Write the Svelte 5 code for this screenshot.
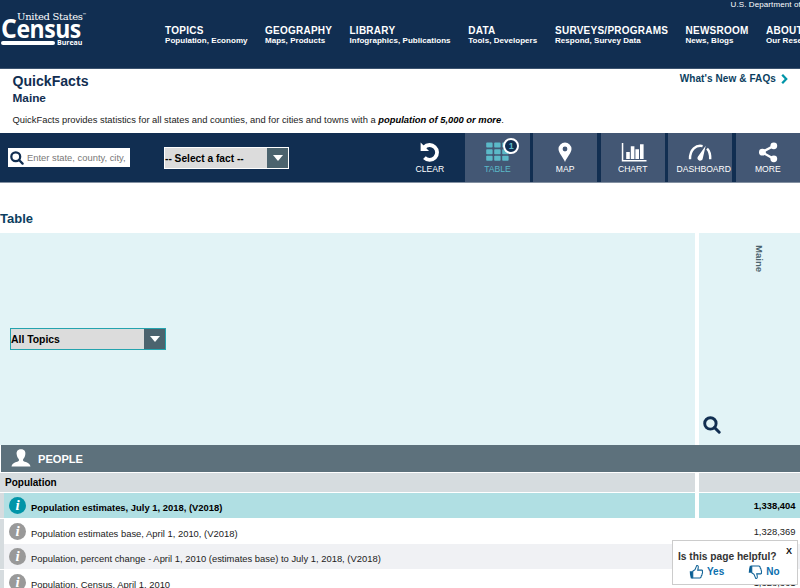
<script>
  const nav = [
    { title: 'TOPICS', sub: 'Population, Economy' },
    { title: 'GEOGRAPHY', sub: 'Maps, Products' },
    { title: 'LIBRARY', sub: 'Infographics, Publications' },
    { title: 'DATA', sub: 'Tools, Developers' },
    { title: 'SURVEYS/PROGRAMS', sub: 'Respond, Survey Data' },
    { title: 'NEWSROOM', sub: 'News, Blogs' },
    { title: 'ABOUT US', sub: 'Our Research' }
  ]

  const tabs = ['TABLE', 'MAP', 'CHART', 'DASHBOARD', 'MORE']

  const rows = [
    { label: 'Population estimates, July 1, 2018, (V2018)', value: '1,338,404' },
    { label: 'Population estimates base, April 1, 2010, (V2018)', value: '1,328,369' },
    { label: 'Population, percent change - April 1, 2010 (estimates base) to July 1, 2018, (V2018)', value: '0.8%' },
    { label: 'Population, Census, April 1, 2010', value: '1,328,361' }
  ]

  let selected = $state('TABLE')
  let active = $state(0)
  let feedback = $state(true)
</script>

{#snippet search()}
  <svg class="search-icon" viewBox="0 0 18 18">
    <circle cx="7.4" cy="7.4" r="5.7" />
    <path d="M11.6 11.6L16.2 16.2" />
  </svg>
{/snippet}

{#snippet thumb()}
  <svg class="thumb" viewBox="0 0 16 16">
    <path class="line" d="M4 7.2L6.4 5.6L8.2 1.2Q10.4 .8 9.8 4L9.3 6H13.6Q14.9 6.2 14.2 7.8Q15 9 13.9 10Q14.3 11.3 13.1 12Q13.1 14.4 11.5 14.4H4Z" />
    <path class="cuff" d="M.8 7.2H4V14.8H2Q.8 11 .8 7.2Z" />
  </svg>
{/snippet}

<div class="page">
  <header>
    <div class="logo">
      <span class="us">United States<small>™</small></span>
      <span class="census"><big>C</big>ensus</span>
      <span class="bureau"><i></i>Bureau</span>
    </div>
    <nav>
      {#each nav as item}
        <div class="nav-item">
          <b>{item.title}</b>
          <span>{item.sub}</span>
        </div>
      {/each}
    </nav>
    <span class="department">U.S. Department of Commerce</span>
  </header>

  <section class="intro">
    <div class="titles">
      <h1>QuickFacts</h1>
      <h2>Maine</h2>
      <p>QuickFacts provides statistics for all states and counties, and for cities and towns with a <strong>population of 5,000 or more</strong>.</p>
    </div>
    <div class="faq">
      What's New &amp; FAQs
      <svg viewBox="0 0 7 10"><path d="M1.2 .8L5.2 5L1.2 9.2" /></svg>
    </div>
  </section>

  <section class="toolbar">
    <div class="search-box">
      {@render search()}
      <span>Enter state, county, city,</span>
    </div>
    <div class="select fact">
      <span>-- Select a fact --</span>
      <i></i>
    </div>
    <div class="actions">
      <div class="action clear">
        <svg viewBox="0 0 24 24">
          <path class="ring" d="M6.2 7.4A7.4 7.4 0 1 1 6.4 17.6" />
          <path d="M2.6 2.6V11H11L8.6 8.4L5.4 5.2Z" />
        </svg>
        <span>CLEAR</span>
      </div>
      {#each tabs as tab}
        <!-- svelte-ignore a11y_click_events_have_key_events, a11y_no_static_element_interactions -->
        <div class="action tab" class:selected={selected === tab} onclick={() => (selected = tab)}>
          {#if tab === 'TABLE'}
            <svg viewBox="0 0 24 24">
              {#each [2.6, 9.2, 15.8] as y}
                {#each [1.2, 9.2, 17.2] as x}
                  <rect {x} {y} width="6.4" height="5" rx=".8" />
                {/each}
              {/each}
            </svg>
            <em>1</em>
          {:else if tab === 'MAP'}
            <svg viewBox="0 0 24 24">
              <path fill-rule="evenodd" d="M12 2.5A6.5 6.5 0 0 0 5.5 9C5.5 13 10.4 17.5 12 22C13.6 17.5 18.5 13 18.5 9A6.5 6.5 0 0 0 12 2.5ZM12 6.6A2.4 2.4 0 1 1 12 11.4A2.4 2.4 0 1 1 12 6.6Z" />
            </svg>
          {:else if tab === 'CHART'}
            <svg class="wide" viewBox="0 0 26 24">
              <path d="M.8 3H2.3V20H25.5V21.5H.8ZM5.2 12H8.8V19H5.2ZM9.8 6.3H13.4V19H9.8ZM14.4 9.3H18V19H14.4ZM19 4.3H22.6V19H19Z" />
            </svg>
          {:else if tab === 'DASHBOARD'}
            <svg viewBox="0 0 24 24">
              <path class="arc" d="M2 19.2C1.8 9.5 8.2 4.6 14.6 6.1M19.1 8.7C21.5 11.2 22.4 14.5 22.2 19.2" />
              <path d="M17.7 5.8L14.8 18.2A2.7 2.7 0 1 1 10 16.4Z" />
            </svg>
          {:else}
            <svg viewBox="0 0 24 24">
              <path class="link" d="M18 5.7L6 12.2L18 19" />
              <circle cx="17.8" cy="5.8" r="3.4" />
              <circle cx="6.4" cy="12.2" r="3.4" />
              <circle cx="17.8" cy="18.8" r="3.4" />
            </svg>
          {/if}
          <span class:long={tab.length > 6}>{tab}</span>
        </div>
      {/each}
    </div>
  </section>

  <h3>Table</h3>

  <section class="table">
    <div class="grid head">
      <div class="cell">
        <div class="select topics">
          <span>All Topics</span>
          <i></i>
        </div>
      </div>
      <div class="cell place">
        <span>Maine</span>
        {@render search()}
      </div>
    </div>
    <div class="category">
      <svg viewBox="0 0 20 18">
        <path d="M10 .3C6.4 .3 5.2 2.8 5.7 5.6C6 7.7 6.8 9.2 7.9 10.2V11.7C6.6 13 1 13.4 .5 17.5H19.5C19 13.4 13.4 13 12.1 11.7V10.2C13.2 9.2 14 7.7 14.3 5.6C14.8 2.8 13.6 .3 10 .3Z" />
      </svg>
      PEOPLE
    </div>
    <div class="grid group">
      <div class="cell">Population</div>
      <div class="cell"></div>
    </div>
    {#each rows as row, i}
      <!-- svelte-ignore a11y_click_events_have_key_events, a11y_no_static_element_interactions -->
      <div class="grid row" class:active={active === i} onclick={() => (active = i)}>
        <div class="cell">
          <span class="info">i</span>
          <span class="text">{row.label}</span>
        </div>
        <div class="cell value">{row.value}</div>
      </div>
    {/each}
  </section>

  {#if feedback}
    <aside>
      <button onclick={() => (feedback = false)}>X</button>
      <div class="question">Is this page helpful?</div>
      <div class="answers">
        <span class="yes">{@render thumb()}Yes</span>
        <span class="no">{@render thumb()}No</span>
      </div>
    </aside>
  {/if}
</div>

<style>
  :global(body) {
    overflow: hidden;
  }

  .page {
    position: relative;
    width: 800px;
    height: 588px;
    overflow: hidden;
    background: #fff;
    color: #222;
    font-family: 'Liberation Sans', Arial, sans-serif;
    white-space: nowrap;
  }

  .page * {
    box-sizing: border-box;
  }

  svg {
    display: block;
    flex: none;
  }

  header {
    position: relative;
    display: flex;
    height: 69px;
    background: #112e51;
    border-bottom: 1px solid #3c536f;
    color: #fff;
  }

  .logo {
    display: flex;
    flex: none;
    flex-direction: column;
    width: 165px;
    padding: 11px 0 0 1px;
  }

  .us {
    height: 8px;
    padding-left: 16px;
    font: 10px/11px 'DejaVu Serif', serif;
    letter-spacing: -0.3px;
  }

  .us small {
    font-size: 4px;
    line-height: 0;
    vertical-align: 4px;
  }

  .census {
    height: 21px;
    font: bold 25px/18px 'Open Sans', sans-serif;
    letter-spacing: -0.5px;
    transform: scaleX(0.92);
    transform-origin: left;
  }

  .census big {
    font-size: 27px;
    line-height: 0;
  }

  .bureau {
    display: flex;
    align-items: center;
    gap: 2px;
    height: 6px;
    font: bold 7px/6px 'Open Sans', sans-serif;
  }

  .bureau i {
    width: 54px;
    height: 4px;
    border-radius: 2px;
    background: #fff;
  }

  nav {
    display: grid;
    grid-template-columns: 100px 84.5px 118.7px 86.8px 130.5px 80.5px 80px;
    padding-top: 25px;
  }

  .nav-item b,
  .nav-item span {
    display: block;
    font-size: 10px;
    line-height: 11px;
    letter-spacing: 0.25px;
  }

  .nav-item span {
    font-size: 8px;
    font-weight: bold;
    line-height: 10px;
    letter-spacing: 0.04px;
  }

  .department {
    position: absolute;
    top: 0;
    left: 730.5px;
    font-size: 8px;
    line-height: 9px;
    letter-spacing: 0.1px;
  }

  .intro {
    display: flex;
    justify-content: space-between;
    height: 64px;
    padding: 4px 12px 0 12.5px;
  }

  h1 {
    margin: 0;
    color: #112e51;
    font-size: 14.1px;
    line-height: 17px;
  }

  h2 {
    margin: 0;
    color: #112e51;
    font-size: 11.8px;
    line-height: 17px;
  }

  p {
    margin: 7px 0 0;
    font-size: 9.38px;
    line-height: 13px;
  }

  strong {
    color: #000;
    font-style: italic;
  }

  .faq {
    display: flex;
    align-items: center;
    gap: 5px;
    height: 11px;
    color: #0b3e60;
    font-size: 10px;
    font-weight: bold;
    letter-spacing: 0.1px;
  }

  .faq svg {
    width: 7px;
    height: 10px;
    fill: none;
    stroke: #0095a8;
    stroke-width: 2.3;
  }

  .toolbar {
    display: flex;
    height: 50px;
    padding-left: 8px;
    background: #112e51;
    border-bottom: 1px solid #8491a2;
  }

  .search-icon {
    width: 18px;
    height: 18px;
    fill: none;
    stroke: #112e51;
    stroke-width: 2.9;
    stroke-linecap: round;
  }

  .search-box {
    display: flex;
    align-items: center;
    gap: 3px;
    width: 122px;
    height: 19px;
    margin-top: 15px;
    padding-left: 2px;
    background: #fff;
    color: #777;
    font-size: 9.4px;
  }

  .search-box .search-icon {
    width: 14px;
    height: 14px;
  }

  .select {
    display: flex;
    align-items: center;
    justify-content: space-between;
    width: 125px;
    height: 22px;
    border: 1px solid #fff;
    background: #dcdcdc;
    color: #000;
    font-size: 10.2px;
    font-weight: bold;
  }

  .select i {
    display: flex;
    align-items: center;
    justify-content: center;
    width: 21px;
    height: 100%;
    background: #4b636e;
  }

  .select i::after {
    content: '';
    border: 5px solid transparent;
    border-top: 6px solid #fff;
    border-bottom: 0;
  }

  .fact {
    margin: 14px 0 0 34px;
  }

  .topics {
    width: 156px;
    border-color: #24a3ae;
    font-size: 10.4px;
  }

  .actions {
    display: flex;
    gap: 3.3px;
    margin-left: auto;
  }

  .action {
    position: relative;
    display: flex;
    flex-direction: column;
    align-items: center;
    width: 64.3px;
    height: 49px;
    padding-top: 7px;
    color: #fff;
    font-size: 8.6px;
    line-height: 10px;
    fill: #fff;
  }

  .action svg {
    width: 24px;
    height: 24px;
  }

  .action .wide {
    width: 26px;
    margin-left: 3px;
  }

  .action .long {
    margin-left: 7px;
  }

  .action.tab {
    background: #435774;
  }

  .action.selected {
    color: #5bb9c8;
    fill: #5bb9c8;
  }

  .ring,
  .arc,
  .link {
    fill: none;
    stroke: #fff;
    stroke-width: 3.8;
  }

  .arc,
  .link {
    stroke-width: 2.4;
  }

  em {
    position: absolute;
    top: 5px;
    left: 38px;
    width: 16px;
    height: 16px;
    border: 2px solid #fff;
    border-radius: 50%;
    background: #112e51;
    color: #5bb9c8;
    font-size: 9px;
    font-style: normal;
    font-weight: bold;
    line-height: 12px;
    text-align: center;
  }

  h3 {
    margin: 28px 0 6px;
    color: #0b3e60;
    font-size: 13px;
    line-height: 16px;
  }

  .grid {
    display: grid;
    grid-template-columns: 695px 100.5px;
    column-gap: 4px;
  }

  .head {
    height: 212px;
  }

  .head .cell {
    display: flex;
    align-items: center;
    padding-left: 10px;
    background: #e2f3f6;
  }

  .head .place {
    flex-direction: column;
    align-items: flex-start;
    justify-content: space-between;
    padding: 12px 0 11px 4px;
  }

  .place span {
    margin-left: 50px;
    color: #4b636e;
    font-size: 9.6px;
    font-weight: bold;
    line-height: 12px;
    writing-mode: vertical-rl;
  }

  .category {
    display: flex;
    align-items: center;
    gap: 7px;
    width: 798.5px;
    height: 27px;
    margin: 0 0 1px 1px;
    padding: 2px 0 0 10px;
    background: #5d717c;
    color: #fff;
    font-size: 11.1px;
    font-weight: bold;
    line-height: 27px;
  }

  .category svg {
    width: 20px;
    height: 18px;
    margin-top: -4px;
    fill: #fff;
  }

  .group .cell {
    height: 19px;
    padding-left: 5px;
    background: #d6dcdf;
    color: #000;
    font-size: 10px;
    font-weight: bold;
    line-height: 19px;
  }

  .group {
    margin-bottom: 1px;
  }

  .row .cell {
    display: flex;
    height: 25px;
    margin-bottom: 0.7px;
    font-size: 9.42px;
  }

  .row .cell:first-child {
    padding-left: 5px;
    border-left: 4px solid #d6dcdf;
  }

  .row:nth-child(even) .cell {
    background: #f0f1f4;
  }

  .row.active .cell {
    background: #b0dfe3;
    color: #000;
    font-weight: bold;
  }

  .info {
    width: 17px;
    height: 17px;
    margin: 4px 5px 0 0;
    border-radius: 50%;
    background: #999;
    color: #fff;
    font: italic bold 15px/17px 'Liberation Serif', serif;
    text-align: center;
  }

  .active .info {
    background: #0095a8;
  }

  .text {
    padding-top: 3px;
    line-height: 24.5px;
  }

  .row .value {
    justify-content: flex-end;
    padding-right: 4px;
    line-height: 25px;
  }

  aside {
    position: absolute;
    top: 540px;
    left: 672px;
    width: 126px;
    height: 45px;
    padding: 9px 0 0 5px;
    border: 1px solid #ccc;
    background: #fff;
    color: #333;
    font-weight: bold;
  }

  button {
    position: absolute;
    top: 3px;
    right: 5px;
    padding: 0;
    border: 0;
    background: none;
    color: #111;
    font: bold 9px/14px 'Liberation Sans', sans-serif;
  }

  .question {
    font-size: 10.2px;
    line-height: 13px;
  }

  .answers {
    display: flex;
    gap: 24px;
    padding-left: 11px;
    color: #0b6fae;
    font-size: 10px;
  }

  .answers span {
    display: flex;
    align-items: center;
    gap: 3px;
    height: 17px;
  }

  .thumb {
    width: 15px;
    height: 16px;
  }

  .line {
    fill: none;
    stroke: #0b5f94;
    stroke-width: 1.1;
  }

  .cuff {
    fill: #0b5f94;
  }

  .no .thumb {
    transform: scaleY(-1);
  }
</style>
